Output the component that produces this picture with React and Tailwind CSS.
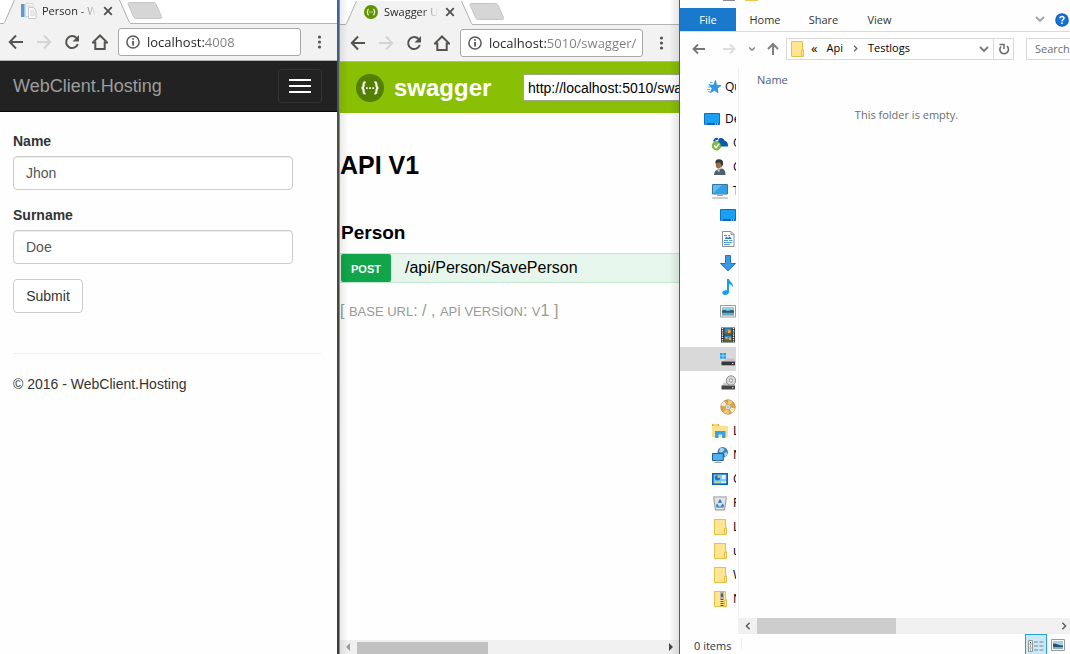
import React from "react";

const UI = "font-['Open_Sans','Noto_Sans',sans-serif]";

/* ---------- Browser chrome ---------- */

function BackArrow() {
  return (
    <svg viewBox="0 0 16 16" className="h-4 w-4" fill="none" stroke="#545350" strokeWidth="2">
      <path d="M15 8H2.5M8 1.5 1.8 8 8 14.5" />
    </svg>
  );
}

function ForwardArrow() {
  return (
    <svg viewBox="0 0 16 16" className="h-4 w-4" fill="none" stroke="#d4d4d4" strokeWidth="2">
      <path d="M1 8h12.5M8 1.5 14.2 8 8 14.5" />
    </svg>
  );
}

function Reload() {
  return (
    <svg viewBox="0 0 16 16" className="h-4 w-4">
      <path d="M12.6 4A6 6 0 1 0 13.8 10" fill="none" stroke="#545350" strokeWidth="2" />
      <path d="M15 1v6.5H8.5z" fill="#545350" />
    </svg>
  );
}

function Home() {
  return (
    <svg viewBox="0 0 16 16" className="h-4 w-4" fill="none" stroke="#545350" strokeWidth="2">
      <path d="M.7 8.6 8 1.5l7.3 7.1H12.7V15H3.3V8.6z" />
    </svg>
  );
}

function InfoIcon() {
  return (
    <svg viewBox="0 0 14 14" className="h-[14px] w-[14px] shrink-0">
      <circle cx="7" cy="7" r="6.1" fill="none" stroke="#5a5a58" strokeWidth="1.5" />
      <path d="M6.2 6h1.7v4.6H6.2zM6.2 3.2h1.7v1.6H6.2z" fill="#4c4c4a" />
    </svg>
  );
}

function PageIcon() {
  return (
    <svg viewBox="0 0 16 16" className="h-4 w-4 shrink-0">
      <path d="M0 1h3.5v13H0z" fill="#5b9bd0" />
      <path d="M4.5.5H12v13H4.5z" fill="#f7f7f7" stroke="#d5d8da" />
      <path d="M7.5 4.5h5l2.5 2.5v8.5H7.5z" fill="#fff" stroke="#c4c8ca" />
      <path d="M5.5 3h5M9 8h4M9 10h5M9 12h5" stroke="#c7d2d6" />
    </svg>
  );
}

function SwaggerMark({ className, fill }) {
  return (
    <svg viewBox="0 0 28 28" className={className}>
      <circle cx="14" cy="14" r="14" fill={fill} />
      <path
        d="M9.6 8.3C7.4 8.3 7.6 9.4 7.6 11c0 1.8-.3 2.7-1.9 3 1.6.3 1.9 1.2 1.9 3 0 1.6-.2 2.7 2 2.7M18.4 8.3c2.2 0 2 1.1 2 2.7 0 1.8.3 2.7 1.9 3-1.6.3-1.9 1.2-1.9 3 0 1.6.2 2.7-2 2.7"
        fill="none"
        stroke="#fff"
        strokeWidth="2.1"
      />
      <path d="M10 13.2h1.7v1.7H10zM13.2 13.2h1.7v1.7h-1.7zM16.4 13.2h1.7v1.7h-1.7z" fill="#fff" />
    </svg>
  );
}

function Browser({ icon, title, urlLabel, url, urlClass, stripClass, toolbarClass, children }) {
  return (
    <section className="relative flex min-w-0 flex-col overflow-hidden bg-[#fefefe]">
      <header className={`flex shrink-0 items-start border-b border-[#b4b4b4] bg-white ${stripClass}`}>
        <div className="relative h-[24px] w-[132px] shrink-0 -mb-px">
          <svg viewBox="0 0 132 24" className="absolute inset-0 h-full w-full">
            <path d="M3.5 24 14 0H120L130.5 24z" fill="#f2f2f2" />
            <path d="M0 23.5H3C4 23.5 4.5 22.5 5 21.5L14.5 0M119.5 0l9.5 21.5c.5 1 1 2 2 2h1" fill="none" stroke="#b0b0b0" />
          </svg>
          <div className="relative flex h-[22px] items-center pl-[21px]">
            {icon}
            <span className={`ml-[5px] w-[54px] overflow-hidden whitespace-nowrap bg-linear-to-r from-[#222] from-70% to-transparent bg-clip-text text-[11px] leading-5 text-transparent ${UI}`}>
              {title}
            </span>
            <button aria-label="Close tab" className="ml-[7px]">
              <svg viewBox="0 0 10 10" className="h-[10px] w-[10px]" stroke="#50504e" strokeWidth="1.8">
                <path d="M1.2 1.2l7.6 7.6M8.8 1.2 1.2 8.8" />
              </svg>
            </button>
          </div>
        </div>
        <button aria-label="New tab" className="-ml-[5px] mt-[2px]">
          <svg viewBox="0 0 36 17" className="h-[17px] w-[36px]">
            <path d="M2.5.5H26C27.5.5 28.5 1 29 2.2L34.5 14.5C35 15.8 34.5 16.5 33 16.5H9.5C8 16.5 7.2 16 6.6 14.8L1.2 2.5C.7 1.2 1.2.5 2.5.5z" fill="#d6d6d6" stroke="#c6c6c6" />
          </svg>
        </button>
      </header>
      <div className={`flex h-[37px] shrink-0 items-center border-b border-[#b6b4b6] bg-[#f2f2f2] pr-[10px] ${toolbarClass}`}>
        <div className="mr-[10px] flex gap-3">
          <button aria-label="Back"><BackArrow /></button>
          <button aria-label="Forward"><ForwardArrow /></button>
          <button aria-label="Reload"><Reload /></button>
          <button aria-label="Home"><Home /></button>
        </div>
        <div className="flex h-[28px] min-w-0 flex-1 items-center rounded-[3px] border border-[#a8a8a8] bg-white pl-[7px] pr-[5px]">
          <InfoIcon />
          <input
            aria-label={urlLabel}
            defaultValue={url}
            className={`ml-[7px] h-6 w-full min-w-0 bg-clip-text text-[13px] text-transparent outline-none ${urlClass} ${UI}`}
          />
        </div>
        <button aria-label="Menu" className="ml-[10px]">
          <svg viewBox="0 0 16 16" className="h-4 w-4" fill="#545350">
            <circle cx="8.5" cy="3" r="1.6" />
            <circle cx="8.5" cy="8" r="1.6" />
            <circle cx="8.5" cy="13" r="1.6" />
          </svg>
        </button>
      </div>
      {children}
    </section>
  );
}

/* ---------- Pages ---------- */

function Field({ id, label, value }) {
  return (
    <div className="mb-[15px]">
      <label htmlFor={id} className="mb-[5px] block font-bold text-[#333]">{label}</label>
      <input
        id={id}
        defaultValue={value}
        className="block h-[34px] w-[280px] max-w-full rounded border border-[#ccc] bg-white px-3 text-[#555] shadow-[inset_0_1px_1px_rgba(0,0,0,0.075)] outline-none"
      />
    </div>
  );
}

function PersonPage() {
  return (
    <div className="flex-1 font-['Liberation_Sans',Arial,sans-serif] text-[14px] leading-5 text-[#333]">
      <nav className="flex h-[51px] items-center justify-between border-b border-[#080808] bg-[#222] pl-[13px] pr-[15px]">
        <a href="#home" className="text-[18px] text-[#9d9d9d]">WebClient.Hosting</a>
        <button aria-label="Toggle navigation" className="flex h-[34px] w-[44px] flex-col items-center justify-center gap-1 rounded border border-[#333]">
          <span className="h-[2px] w-[22px] bg-white" />
          <span className="h-[2px] w-[22px] bg-white" />
          <span className="h-[2px] w-[22px] bg-white" />
        </button>
      </nav>
      <main className="pl-[13px] pr-4 pt-[19px]">
        <form onSubmit={(e) => e.preventDefault()}>
          <Field id="name" label="Name" value="Jhon" />
          <Field id="surname" label="Surname" value="Doe" />
          <button className="block h-[34px] w-[70px] rounded border border-[#ccc] bg-white">Submit</button>
        </form>
        <hr className="mb-5 mt-10 border-[#eee]" />
        <footer>© 2016 - WebClient.Hosting</footer>
      </main>
    </div>
  );
}

function SwaggerPage() {
  return (
    <div className="flex min-w-0 flex-1 flex-col font-['Liberation_Sans',Arial,sans-serif] text-black">
      <div className="flex h-[51px] shrink-0 items-center overflow-hidden bg-[#89bf04] pl-4">
        <SwaggerMark className="h-7 w-7 shrink-0" fill="#547f00" />
        <a href="#swagger" className="ml-[10px] w-[129px] shrink-0 text-[24px] font-bold leading-8 text-white">swagger</a>
        <input
          aria-label="API definition URL"
          defaultValue="http://localhost:5010/swagger/v1/swagger.json"
          className="h-[27px] w-[340px] shrink-0 border border-[#9fa58c] bg-white px-1 text-[14px] outline-none"
        />
      </div>
      <main className="flex-1">
        <h1 className="mt-[36px] text-[25px] font-bold leading-8">API V1</h1>
        <h2 className="mt-10 pl-px text-[19px] font-bold leading-6">Person</h2>
        <div className="mt-2 flex h-[30px] border-y border-[#c3e8d1] bg-[#e7f6ec] pl-px">
          <button className="w-[50px] rounded-[2px] bg-[#10a54a] pt-[2px] text-[11px] font-bold text-white">POST</button>
          <a href="#save" className="pl-[14px] text-[16px] leading-[27px]">/api/Person/SavePerson</a>
        </div>
        <p className="mt-[18px] text-[16px] leading-5 text-[#999]">
          [ <span className="text-[13px]">BASE URL</span>: / , <span className="text-[13px]">APİ VERSİON</span>:{" "}
          <span className="text-[13px]">V</span>1 ]
        </p>
      </main>
      <div className="flex h-[14px] shrink-0 items-center bg-[#f0f0f0] pl-[5px] pr-[5px]">
        <svg viewBox="0 0 6 8" className="h-2 w-[6px]"><path d="M5 0v8L1 4z" fill="#a09c9a" /></svg>
        <div className="ml-[6px] flex-1 self-stretch pt-[2px]">
          <div className="h-full w-[42%] bg-[#c1c1c1]" />
        </div>
        <svg viewBox="0 0 6 8" className="h-2 w-[6px]"><path d="M1 0v8l4-4z" fill="#4a4540" /></svg>
      </div>
      <div className="pointer-events-none absolute inset-y-0 left-0 w-2 bg-linear-to-r from-black/8 to-transparent" />
      <div className="pointer-events-none absolute inset-y-0 right-0 w-[10px] bg-linear-to-l from-black/10 to-transparent" />
    </div>
  );
}

/* ---------- Explorer icons ---------- */

const ICON = "h-4 w-4 shrink-0";

const icons = {
  star: (
    <svg viewBox="0 0 16 16" className={ICON}>
      <path d="M9.5 1.5 10.5 6.2 15 6.6 11.3 9.3 12 14 8.6 11.2 4.5 13.6 6.1 9.2 3.5 6.3 7.8 6z" fill="#2f9be6" stroke="#1c7fd0" strokeWidth=".7" />
      <path d="M4 3.5h2.5M2.5 5.500h2M2 8h2.500M1 10.500h3M2 12.800h2" stroke="#4db0f0" />
    </svg>
  ),
  desktop: (
    <svg viewBox="0 0 16 16" className={ICON}>
      <path d="M.5 2.5h15v11H.5z" fill="#18a0f5" stroke="#0d70bd" />
      <path d="M1 12h14v1.5H1z" fill="#0b64ad" />
      <path d="M1.5 12.4h1v1h-1zM11 12.4h1v1h-1zM13 12.4h1v1h-1z" fill="#fff" />
    </svg>
  ),
  cloud: (
    <svg viewBox="0 0 16 16" className={ICON}>
      <path d="M4 10C4 7 5.5 6.5 6.5 6.5 5.5 4 7.5 2.5 9.5 3c2 .3 3 1.5 3.200 3 2 0 3.300 1.500 3.300 5.500H8z" fill="#0a58b0" />
      <path d="M2 6.500c.5-2 2-3 4-2.700" stroke="#0a58b0" strokeWidth="1.8" fill="none" />
      <circle cx="4.5" cy="10.8" r="4.300" fill="#7cc142" stroke="#5a9a22" strokeWidth=".6" />
      <path d="m2.3 10.600 1.800 2 3-4" fill="none" stroke="#fff" strokeWidth="1.5" />
    </svg>
  ),
  user: (
    <svg viewBox="0 0 16 16" className={ICON}>
      <path d="M2 16c0-2.500 1-4.500 3.500-5.500l4-1c2.500.5 4 2 4 6.500z" fill="#4f626e" />
      <ellipse cx="6.500" cy="5.500" rx="2.800" ry="4" fill="#9d6b47" />
      <path d="M3.500 4.500C3 1 5 0 7.500.2 10.500.5 11.500 2 11 5.500L9.500 9C9.600 6 9 3.500 7 3.500z" fill="#3a3836" />
      <path d="m5 10.500 2 3 1-3z" fill="#cdd8dc" />
    </svg>
  ),
  pc: (
    <svg viewBox="0 0 16 16" className={ICON}>
      <path d="M.5 1.5h15v9.500H.5z" fill="#5ebcf2" stroke="#3877a5" />
      <path d="M1 10.500 10 2h5v8.500z" fill="#339fe5" />
      <path d="M5 12.500h6M0 15h16" stroke="#9ba4aa" />
    </svg>
  ),
  document: (
    <svg viewBox="0 0 16 16" className={ICON}>
      <path d="M2.5.5h8.500l3 3v12H2.500z" fill="#fff" stroke="#8b8f91" />
      <path d="M11 .5v3h3" fill="none" stroke="#8b8f91" />
      <path d="M4 4.500h3M8 4.500h2M4 9.500h4M9 9.500h3.500M4 11.500h8.500M4 13.500h6" stroke="#4a9ad2" />
      <path d="M4.500 8 6.500 5.500 8 7l1.500-1.500L12 8z" fill="#217dc0" />
    </svg>
  ),
  download: (
    <svg viewBox="0 0 16 16" className={ICON}>
      <path d="M5.500.5h5v8h5L8 15.800.5 8.500h5z" fill="#3b98e5" stroke="#2375bf" />
    </svg>
  ),
  music: (
    <svg viewBox="0 0 16 16" className={ICON}>
      <path d="M7 0h2c.5 3 4.500 3.500 4 8.500-.5-2-2-3-4-3.200V13c0 2-2 3-4 3-2.500 0-3.500-2-2-3.700C4 11.300 5.500 11 7 11.300z" fill="#159ff0" />
    </svg>
  ),
  picture: (
    <svg viewBox="0 0 16 16" className={ICON}>
      <path d="M.5 2.500h15v11.500H.5z" fill="#fff" stroke="#9b999c" />
      <path d="M2 4h12v8.500H2z" fill="#8ccff0" />
      <path d="M2 7.500c3-1.500 4 1 7 0s4-.5 5 0v2.500H2z" fill="#315b66" />
      <path d="M2 9.800h12v2.700H2z" fill="#6ca7c4" />
    </svg>
  ),
  video: (
    <svg viewBox="0 0 16 16" className={ICON}>
      <path d="M1 .5h14v15H1z" fill="#303030" />
      <path d="M2.500 1v14M13.500 1v14" stroke="#fff" strokeWidth="1.4" strokeDasharray="1.2 1" />
      <path d="M4.500 1.200h7v6.300h-7zM4.500 8.500h7v6.300h-7z" fill="#3f87d3" />
      <path d="M4.500 5.500h7v2h-7zM4.500 12.500h7v2.300h-7z" fill="#59652b" />
      <path d="M8 3h2.500v3H8zM5.500 10h2v2h-2zM9 10.500h2V13H9z" fill="#f1ac32" />
    </svg>
  ),
  drive: (
    <svg viewBox="0 0 16 16" className={ICON}>
      <path d="M0 2h2.700v2.600H0zM3.300 2H6v2.600H3.300zM0 5.200h2.700v2.600H0zM3.300 5.200H6v2.600H3.300z" fill="#1ba3f2" />
      <path d="M7 7.500h7l1.500 3H2z" fill="#c3c3c3" />
      <path d="M1.500 10.500H15v3.800H1.500z" fill="#373737" />
      <path d="M12 12h1.500v1H12z" fill="#b8e8b0" />
    </svg>
  ),
  discDrive: (
    <svg viewBox="0 0 16 16" className={ICON}>
      <path d="M4 7.500h10l1.500 3H2z" fill="#c9c9c9" />
      <path d="M1.500 10.500H15v4H1.500z" fill="#454545" />
      <circle cx="11" cy="5.500" r="4.700" fill="#dcdcdc" stroke="#8e8e8e" />
      <circle cx="11" cy="5.500" r="1.700" fill="#fff" stroke="#8e8e8e" />
      <path d="M12 12.300h1.500v1H12z" fill="#ddd" />
    </svg>
  ),
  disc: (
    <svg viewBox="0 0 16 16" className={ICON}>
      <circle cx="8" cy="8" r="7.200" fill="#e2a637" stroke="#a48657" strokeWidth=".8" />
      <path d="M8 8 1 6.500A7 7 0 0 1 4 2zM8 8l7 1.500A7 7 0 0 1 12 14z" fill="#f8edcd" />
      <path d="M8 8 3 13.500 9 15zM8 8l5-5.500L8 1z" fill="#f2cc79" />
      <circle cx="8" cy="8" r="2.700" fill="#f0f0f0" stroke="#999" strokeWidth=".7" />
      <circle cx="8" cy="8" r="1" fill="#fff" stroke="#888" strokeWidth=".6" />
    </svg>
  ),
  libraries: (
    <svg viewBox="0 0 16 16" className={ICON}>
      <path d="M0 1h6.500l1 2H16v11H0z" fill="#fbe290" />
      <path d="M0 1h6.500l1 2H0z" fill="#e7ab28" />
      <path d="M1.500 1.500h4v1h-4z" fill="#fff" />
      <path d="M3 8h10.500v7H10v-3.500H6.500V15H3z" fill="#35a3ea" />
    </svg>
  ),
  network: (
    <svg viewBox="0 0 16 16" className={ICON}>
      <circle cx="10.700" cy="5.300" r="5.200" fill="#3a7fb6" />
      <path d="M8 1.500C10 .5 12 1 12.500 3L10 5.500 7 5zM12 6l3-1c.5 2-.5 4-2 5z" fill="#a9d3ea" />
      <path d="M.5 6.500h10.800v7H.5z" fill="#4fb1f0" stroke="#205d98" />
      <path d="M4.500 14h3M2.500 15.500h7" stroke="#9ba4aa" />
    </svg>
  ),
  control: (
    <svg viewBox="0 0 16 16" className={ICON}>
      <path d="M.8 2.800h14.400v10.400H.8z" fill="#7ccbf6" stroke="#0963b4" strokeWidth="1.6" />
      <circle cx="5.500" cy="6.800" r="2.700" fill="#1d75be" />
      <path d="M5.500 6.800V4.100a2.700 2.700 0 0 1 2.700 2.700z" fill="#f5c944" />
      <path d="M10 5h3.500M10 7h3.500" stroke="#fff" strokeWidth="1.3" />
      <path d="M3 11.200h5" stroke="#f1d154" strokeWidth="1.2" />
      <path d="M9 11.200h5" stroke="#fff" strokeWidth="1.2" />
    </svg>
  ),
  recycle: (
    <svg viewBox="0 0 16 16" className={ICON}>
      <path d="M1.500 1.500h13L12.500 15h-9z" fill="#e1e3e4" stroke="#8f9294" />
      <path d="M1 1h14v2H1z" fill="#c3c6c7" />
      <path d="M8 4 10.200 7.700H5.800zM5 8.300l2 3.200H3.900zM11 8.300l1 3.200H8.500z" fill="#1d78cb" />
      <path d="M4.500 12h7" stroke="#1d78cb" />
    </svg>
  ),
  folder: (
    <svg viewBox="0 0 16 16" className={ICON}>
      <path d="M2.500.5h11v8h1v7h-12z" fill="#fde592" stroke="#e8c04c" />
      <path d="M12.500 15V9.500h2" fill="none" stroke="#e8c04c" />
    </svg>
  ),
  zip: (
    <svg viewBox="0 0 16 16" className={ICON}>
      <path d="M2.500.5h11v8h1v7h-12z" fill="#fde592" stroke="#e8c04c" />
      <path d="M12.500 15V9.500h2" fill="none" stroke="#e8c04c" />
      <path d="M8 0h4v8H8z" fill="#b5b5b5" />
      <path d="M9.200 2.500h1.600v3.500H9.200z" fill="#454545" />
      <path d="M10 8v8" stroke="#55524c" strokeWidth="3" strokeDasharray="1 1" />
    </svg>
  ),
};

const tree = [
  ["desktop", "De", 1],
  ["cloud", "O", 2],
  ["user", "C", 2],
  ["pc", "T", 2],
  ["desktop", "", 3],
  ["document", "", 3],
  ["download", "", 3],
  ["music", "", 3],
  ["picture", "", 3],
  ["video", "", 3],
  ["drive", "", 3, true],
  ["discDrive", "", 3],
  ["disc", "", 3],
  ["libraries", "L", 2],
  ["network", "N", 2],
  ["control", "C", 2],
  ["recycle", "R", 2],
  ["folder", "L", 2],
  ["folder", "u", 2],
  ["folder", "W", 2],
  ["zip", "N", 2],
];

const indent = { 1: "pl-6", 2: "pl-8", 3: "pl-10" };

function TreeRow({ icon, label, level, selected }) {
  return (
    <li className={`flex h-6 items-center gap-[5px] overflow-hidden text-[12px] text-black ${indent[level]} ${selected ? "bg-[#d9d9d9]" : ""}`}>
      {icons[icon]}
      {label && <span>{label}</span>}
    </li>
  );
}

function Chevron({ d, color, className }) {
  return (
    <svg viewBox="0 0 10 10" className={className} fill="none" stroke={color} strokeWidth="1.8">
      <path d={d} />
    </svg>
  );
}

function Explorer() {
  return (
    <section className={`flex min-w-0 flex-col overflow-hidden bg-[#fefefe] text-[11px] leading-4 text-[#333] ${UI}`}>
      <div className="flex h-2 shrink-0 gap-[10px] pl-[43px]">
        <span className="h-px w-3 bg-[#8f8a8a]" />
        <span className="h-px w-[13px] bg-[#ecc350]" />
      </div>
      <div className="flex h-6 shrink-0 items-stretch border-b border-[#dadbdc]">
        <button className="w-14 bg-[#1979ca] text-white">File</button>
        <button className="w-[58px]">Home</button>
        <button className="w-[59px]">Share</button>
        <button className="w-[53px]">View</button>
        <button aria-label="Collapse ribbon" className="ml-auto">
          <Chevron d="M1 2l4 4 4-4" color="#a2a2a2" className="h-[10px] w-[10px]" />
        </button>
        <button aria-label="Help" className="ml-[10px] mr-px">
          <svg viewBox="0 0 14 14" className="h-[14px] w-[14px]">
            <circle cx="7" cy="7" r="6.8" fill="#0f62bd" />
            <circle cx="7" cy="7" r="5.5" fill="#1674d2" />
            <path d="M5 5.2C5 3 9.2 3 9 5.3 8.9 6.6 7 6.500 7 8.400" fill="none" stroke="#fff" strokeWidth="1.5" />
            <path d="M6.200 9.600h1.600v1.500H6.200z" fill="#fff" />
          </svg>
        </button>
      </div>
      <div className="flex h-[35px] shrink-0 items-center pb-[2px] pl-3">
        <button aria-label="Back">
          <svg viewBox="0 0 14 14" className="h-[14px] w-[14px]" fill="none" stroke="#757575" strokeWidth="1.8"><path d="M13 7H1.500M6 2.500 1.500 7 6 11.500" /></svg>
        </button>
        <button aria-label="Forward" className="ml-4">
          <svg viewBox="0 0 14 14" className="h-[14px] w-[14px]" fill="none" stroke="#dedede" strokeWidth="1.8"><path d="M1 7h11.500M8 2.500 12.500 7 8 11.500" /></svg>
        </button>
        <button aria-label="Recent locations" className="ml-3">
          <Chevron d="M1.500 3 5 6.500l3.500-3.500" color="#808080" className="h-2 w-2" />
        </button>
        <button aria-label="Up" className="ml-[10px]">
          <svg viewBox="0 0 14 14" className="h-[14px] w-[14px]" fill="none" stroke="#808080" strokeWidth="2"><path d="M7 13V2M2 7l5-5 5 5" /></svg>
        </button>
        <div className="ml-[6px] flex h-[22px] flex-1 items-center border border-[#d9d9d9] bg-white text-black">
          <span className="ml-[2px]">{icons.folder}</span>
          <span className="ml-[6px] pb-px text-[13px]">«</span>
          <button className="ml-[9px] pb-px">Api</button>
          <Chevron d="M3 1l4 4-4 4" color="#666" className="mx-[9px] h-[7px] w-[7px]" />
          <button className="pb-px">Testlogs</button>
          <button aria-label="Previous locations" className="ml-auto mr-1">
            <Chevron d="M1 3 5 7l4-4" color="#777" className="h-[10px] w-[10px]" />
          </button>
          <button aria-label="Refresh" className="flex h-full w-5 items-center justify-center border-l border-[#d9d9d9]">
            <svg viewBox="0 0 12 12" className="h-3 w-3">
              <path d="M9 3.200A4.300 4.300 0 1 1 3 3.500" fill="none" stroke="#6c6c6c" strokeWidth="1.6" />
              <path d="M1.500 1.500h4.500v4.500" fill="none" stroke="#6c6c6c" strokeWidth="1.5" />
            </svg>
          </button>
        </div>
        <input
          aria-label="Search"
          placeholder="Search"
          className="ml-3 h-[22px] w-[44px] border border-r-0 border-[#d9d9d9] bg-white pl-2 outline-none placeholder:text-[#6d6d6d]"
        />
      </div>
      <div className="flex min-h-0 flex-1">
        <ul className="w-14 shrink-0 overflow-hidden pt-2">
          <li className="mb-2 flex h-6 items-center gap-[3px] overflow-hidden pl-[26px] text-[12px] text-black">
            {icons.star}
            <span>Qu</span>
          </li>
          {tree.map(([icon, label, level, selected], i) => (
            <TreeRow key={i} icon={icon} label={label} level={level} selected={selected} />
          ))}
        </ul>
        <div className="ml-[2px] flex flex-1 flex-col border-l border-[#f0f0f0]">
          <button className="mt-[5px] self-start pl-[18px] text-[#4c607a]">Name</button>
          <p className="mt-[19px] pl-1 text-center text-[#6d6d6d]">This folder is empty.</p>
          <div className="mt-auto flex h-4 items-center bg-[#f0f0f0] pl-[5px] pr-[2px]">
            <Chevron d="M7 1 3 5l4 4" color="#5c5c58" className="h-2 w-2" />
            <div className="ml-[5px] flex-1 self-stretch">
              <div className="h-full w-[46%] bg-[#cdcdcd]" />
            </div>
            <Chevron d="M3 1l4 4-4 4" color="#5c5c58" className="h-2 w-2" />
          </div>
        </div>
      </div>
      <footer className="flex h-5 shrink-0 items-center pl-[14px] pr-[5px] text-[#24364e]">
        <span className="pt-1">0 items</span>
        <span className="ml-[10px] h-3 w-px bg-[#eee]" />
        <button aria-label="Details view" className="ml-auto flex h-full w-[22px] items-center justify-center border border-b-0 border-[#26a0da] bg-[#cbe8f6] pt-[2px]">
          <svg viewBox="0 0 16 12" className="h-3 w-4">
            <path d="M.5.5h4v11h-4zM.5 4h4M.5 8h4" fill="#fff" stroke="#999" />
            <path d="M2 2h1v1H2zM2 5.500h1v1H2zM2 9.500h1v1H2z" fill="#245" />
            <path d="M6 2h4M11.500 2h4M6 6h4M11.500 6h4M6 10h4M11.500 10h4" stroke="#7d8a92" />
          </svg>
        </button>
        <button aria-label="Large thumbnails view" className="ml-1 pt-[2px]">
          <svg viewBox="0 0 14 12" className="h-3 w-[14px]">
            <path d="M.5.5h13v11H.5z" fill="#fff" stroke="#999" />
            <path d="M2 2h10v8H2z" fill="#a3d3ee" />
            <path d="M2 4.500c4 0 6 2 10 2V10H2z" fill="#2e5268" />
            <path d="M2 8h10v2H2z" fill="#7facc6" />
          </svg>
        </button>
      </footer>
    </section>
  );
}

export default function App() {
  return (
    <div className="grid min-h-screen grid-cols-[337fr_3px_339fr_1px_390fr] overflow-hidden bg-white">
      <Browser
        icon={<PageIcon />}
        title="Person - WebClient"
        urlLabel="Person page address"
        url="localhost:4008"
        urlClass="bg-[linear-gradient(to_right,#222_57px,#7d7d7d_57px)]"
        stripClass="h-6"
        toolbarClass="pl-2"
      >
        <PersonPage />
      </Browser>
      <div className="border-r border-[#8a8a8a] bg-linear-to-b from-[#3d66a0] via-[#4d4b45] via-20% to-[#3c3c39]" />
      <Browser
        icon={<SwaggerMark className="mx-px h-[14px] w-[14px] shrink-0" fill="#5f9400" />}
        title="Swagger UI"
        urlLabel="Swagger page address"
        url="localhost:5010/swagger/ui/index.html"
        urlClass="bg-[linear-gradient(to_right,#222_57px,#7d7d7d_57px)]"
        stripClass="h-[25px] pl-[2px] pt-px"
        toolbarClass="pl-[10px]"
      >
        <SwaggerPage />
      </Browser>
      <div className="bg-[#5c5c5c]" />
      <Explorer />
    </div>
  );
}
